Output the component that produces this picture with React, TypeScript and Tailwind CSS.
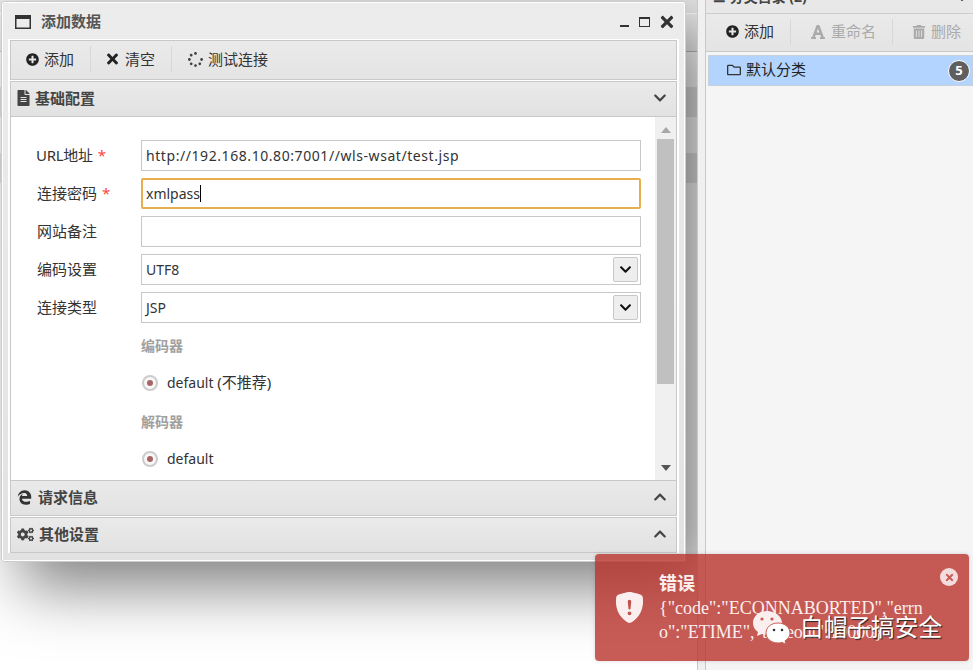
import type { ReactNode } from 'react';
import {
  FaChevronDown,
  FaChevronUp,
  FaCogs,
  FaEdgeLegacy,
  FaFileAlt,
  FaFont,
  FaPlusCircle,
  FaRegFolder,
  FaSpinner,
  FaTimes,
  FaTrashAlt,
} from 'react-icons/fa';
import { BsShieldFillExclamation } from 'react-icons/bs';

const sans = 'font-["Noto_Sans","Noto_Sans_CJK_SC",sans-serif]';

const ToolButton = ({ icon, label, muted }: { icon: ReactNode; label: string; muted?: boolean }) => (
  <div className={`flex items-center gap-[5px] ${muted ? 'text-[#aaa]' : 'text-[#333]'}`}>
    {icon}
    <span className="text-[15px] leading-[21px]">{label}</span>
  </div>
);

const Separator = () => <div className="mx-4 h-[26px] w-px bg-[#d3d9dd]" />;

const SectionHeader = ({ icon, label, open }: { icon: ReactNode; label: string; open?: boolean }) => (
  <div className="flex h-[36px] shrink-0 items-center border border-[#c8c8c8] bg-gradient-to-b from-[#eaeaea] to-[#e2e2e2] pb-[2px] pl-[6px] pr-[9px] text-[#444]">
    {icon}
    <span className="ml-[5px] text-[15px] font-bold leading-[21px]">{label}</span>
    <div className="ml-auto">
      {open ? <FaChevronDown size={14} /> : <FaChevronUp size={14} />}
    </div>
  </div>
);

const Field = ({ label, required, tight, children }: { label: string; required?: boolean; tight?: boolean; children: ReactNode }) => (
  <div className="flex items-center">
    <div className={`w-[105px] text-[15px] leading-[21px] text-[#333] ${tight ? 'pl-0 tracking-[-0.3px]' : 'pl-[1px]'}`}>
      {label}
      {required && <span className="ml-[5px] text-[#f44]">*</span>}
    </div>
    {children}
  </div>
);

const TextBox = ({ value, focused, wide }: { value?: string; focused?: boolean; wide?: boolean }) => (
  <div
    className={`flex h-[31px] w-[500px] items-center text-[14px] text-[#333] ${
      focused ? 'rounded-[2px] border-2 border-[#e8ae4c] px-[3px]' : 'border border-[#c8c8c8] px-[4px]'
    } ${wide ? 'tracking-[0.57px]' : ''}`}
  >
    {value}
    {focused && <span className="h-[17px] w-px bg-black" />}
  </div>
);

const SelectBox = ({ value }: { value: string }) => (
  <div className="flex h-[31px] w-[500px] items-center justify-between border border-[#c8c8c8] pl-[4px] pr-[2px] text-[14px] text-[#333]">
    {value}
    <div className="flex h-[25px] w-[25px] items-center justify-center rounded-[2px] border border-[#c8c8c8] bg-[#eee] text-[#111]">
      <FaChevronDown size={13} />
    </div>
  </div>
);

const Radio = ({ children }: { children: ReactNode }) => (
  <div className="flex items-center gap-[9px] pl-[1px] text-[14px] leading-[21px] text-[#333]">
    <div className="flex h-[16px] w-[16px] items-center justify-center rounded-full border-2 border-[#ccc] bg-[#f8f8f8]">
      <div className="h-[6px] w-[6px] rounded-full bg-[#a86464]" />
    </div>
    <div>{children}</div>
  </div>
);

const WechatMark = () => (
  <svg width="40" height="36" viewBox="0 0 40 36">
    <path d="M15 1C7 1 1 6 1 13c0 4 2 7 5 9l-1 4 5-2c2 .5 3 .7 5 .7 8 0 15-5 15-11.700S23 1 15 1z" fill="#fbeeee" />
    <path d="M26 13c-7 0-12 4.500-12 10s5 10 12 10c1.500 0 3-.3 4-.6l4 2-1-3.500c3-2 5-4.700 5-7.900 0-5.500-5-10-12-10z" fill="#fff" stroke="#c75c56" />
    <circle cx="10" cy="9" r="1.600" fill="#c75c56" />
    <circle cx="20" cy="9" r="1.600" fill="#c75c56" />
    <circle cx="22" cy="20" r="1.300" fill="#333" />
    <circle cx="30" cy="20" r="1.300" fill="#333" />
  </svg>
);

export default function App() {
  return (
    <div className={`relative flex h-[670px] w-[973px] overflow-hidden bg-[#f0f0f0] ${sans}`}>
      {/* list behind the window */}
      <div className="relative h-full w-[698px] shrink-0 overflow-hidden border-r border-[#c8c8c8] bg-white">
        <div className="h-[14px] border-b border-white bg-[#e8e8e8]" />
        <div className="h-[38px] border-b border-[#bbb] bg-[#eee]" />
        <div className="h-[35px] bg-white" />
        <div className="h-[30px] bg-[#e6e6e6]" />
        <div className="h-[36px] bg-white" />
        <div className="h-[30px] bg-[#e6e6e6]" />

        <div className="absolute left-[1px] top-[1px] flex h-[561px] w-[685px] flex-col rounded-[3px] border border-[#ccc] bg-gradient-to-b from-[#ececec] to-[#e2e2e2] px-[6px] pb-[8px] shadow-[inset_0_0_0_1px_#fff,20px_25px_63px_rgba(0,0,0,0.5)]">
          <div className="flex h-[37px] shrink-0 items-center pl-[7px] pr-[3px] pt-[2px] text-[#444]">
            <svg width="16" height="16" viewBox="0 0 16 16" className="text-[#333]">
              <path d="M0 1h16v14H0zM1.500 5v8.500h13V5z" fill="currentColor" fillRule="evenodd" />
            </svg>
            <span className="ml-[10px] text-[15px] font-bold leading-[21px] text-[#555]">添加数据</span>
            <div className="ml-auto flex items-center gap-[8px] text-[#333]">
              <div className="mr-[2px] mt-[8px] h-[2px] w-[9px] bg-[#333]" />
              <div className="h-[10px] w-[11px] border border-t-2 border-[#333]" />
              <FaTimes size={18} />
            </div>
          </div>

          <div className="flex min-h-0 flex-1 flex-col bg-white px-[2px] pt-[1px]">
            <div className="mb-px flex h-[40px] shrink-0 items-center border border-[#c8c8c8] bg-gradient-to-b from-[#eaeaea] to-[#e4e4e4] pb-[2px] pl-[15px]">
              <ToolButton icon={<FaPlusCircle size={13} className="text-[#222]" />} label="添加" />
              <Separator />
              <ToolButton icon={<FaTimes size={16} className="mr-[2px] w-[11px] text-[#222]" />} label="清空" />
              <Separator />
              <ToolButton icon={<FaSpinner size={15} className="text-[#444]" />} label="测试连接" />
            </div>
            <SectionHeader icon={<FaFileAlt size={16} className="w-[13px]" />} label="基础配置" open />

            <div className="flex min-h-0 flex-1 overflow-hidden border-x border-[#c8c8c8]">
              <div className="flex min-w-0 flex-1 flex-col pl-[25px] pt-[23px]">
                <div className="flex flex-col gap-[7px]">
                  <Field label="URL地址" required tight>
                    <TextBox value="http://192.168.10.80:7001//wls-wsat/test.jsp" wide />
                  </Field>
                  <Field label="连接密码" required>
                    <TextBox value="xmlpass" focused />
                  </Field>
                  <Field label="网站备注">
                    <TextBox />
                  </Field>
                  <Field label="编码设置">
                    <SelectBox value="UTF8" />
                  </Field>
                  <Field label="连接类型">
                    <SelectBox value="JSP" />
                  </Field>
                </div>
                <div className="pl-[105px]">
                  <div className="mt-[12px] text-[14px] font-bold leading-[21px] text-[#a0a0a0]">编码器</div>
                  <div className="mt-[16px]">
                    <Radio>
                      default <span className="text-[15px]">(不推荐)</span>
                    </Radio>
                  </div>
                  <div className="mt-[18px] text-[14px] font-bold leading-[21px] text-[#a0a0a0]">解码器</div>
                  <div className="mt-[16px]">
                    <Radio>default</Radio>
                  </div>
                </div>
              </div>

              <div className="flex w-[21px] shrink-0 flex-col items-center bg-[#f0f0f0] pt-[10px]">
                <div className="h-0 w-0 border-x-[5px] border-b-[6px] border-x-transparent border-b-[#a8a8a8]" />
                <div className="mt-[6px] h-[245px] w-[17px] shrink-0 bg-[#c0c0c0]" />
                <div className="mt-[81px] h-0 w-0 border-x-[5px] border-t-[6px] border-x-transparent border-t-[#555]" />
              </div>
            </div>

            <SectionHeader icon={<FaEdgeLegacy size={15} className="mr-px text-[#333]" />} label="请求信息" />
            <div className="h-px shrink-0" />
            <SectionHeader icon={<FaCogs size={17} className="w-[17px]" />} label="其他设置" />
          </div>
        </div>
      </div>

      <div className="w-[7px] shrink-0" />

      {/* category panel */}
      <div className="flex min-w-0 flex-1 flex-col border-l border-[#c8c8c8] bg-[#f5f5f5]">
        <div className="flex h-[14px] shrink-0 items-center justify-between overflow-hidden border-b border-[#ccc] bg-[#e8e8e8] pl-[7px] pr-[5px] text-[#444]">
          <span className="mt-[-20px] text-[14px] font-bold">☰ 分类目录 (2)</span>
          <FaChevronDown size={12} className="mt-[-18px]" />
        </div>
        <div className="flex h-[38px] shrink-0 items-center border-b border-[#c8c8c8] bg-gradient-to-b from-[#eaeaea] to-[#e4e4e4] pb-[2px] pl-[20px]">
          <ToolButton icon={<FaPlusCircle size={13} className="text-[#222]" />} label="添加" />
          <Separator />
          <ToolButton muted icon={<FaFont size={16} className="ml-[3px]" />} label="重命名" />
          <Separator />
          <ToolButton muted icon={<FaTrashAlt size={14} className="ml-[3px]" />} label="删除" />
        </div>
        <div className="ml-[2px] mt-[3px] flex h-[31px] items-center border border-[#c8d0da] bg-[#b3d4ff] pb-[2px] pl-[18px] pr-[2px] text-[15px] leading-[21px] text-[#222]">
          <FaRegFolder size={14} className="text-[#333]" />
          <span className="ml-[5px]">默认分类</span>
          <div className="ml-auto mt-[2px] flex h-[22px] w-[22px] items-center justify-center rounded-full border border-white bg-[#5f5f5f] text-[13px] font-bold text-white">
            5
          </div>
        </div>
      </div>

      {/* error toast */}
      <div className="absolute left-[595px] top-[554px] flex h-[107px] w-[374px] items-start rounded-[4px] bg-[#b9332c]/80 pl-[19px] pt-[18px] text-white shadow-[0_0_4px_rgba(0,0,0,0.15)]">
        <BsShieldFillExclamation size={31} className="mt-[20px] shrink-0 text-[#fbeeee]" />
        <div className='ml-[14px] w-[294px] break-all font-["Liberation_Serif","Noto_Sans_CJK_SC",serif] text-[#fbeeee]'>
          <div className="text-[18px] font-bold leading-[24px]">错误</div>
          <div className="text-[18px] font-normal leading-[24px]">
            {'{"code":"ECONNABORTED","errno":"ETIME","timeout":10000}'}
          </div>
        </div>
        <div className="absolute right-[11px] top-[14px] flex h-[18px] w-[18px] items-center justify-center rounded-full bg-[#f3dedd] text-[#c75c56]">
          <FaTimes size={11} />
        </div>
        <div className="absolute left-[157px] top-[56px] flex items-center gap-[8px]">
          <WechatMark />
          <span className="text-[23.700px] leading-none text-white [text-shadow:1px_1px_1px_#222]">白帽子搞安全</span>
        </div>
      </div>
    </div>
  );
}
